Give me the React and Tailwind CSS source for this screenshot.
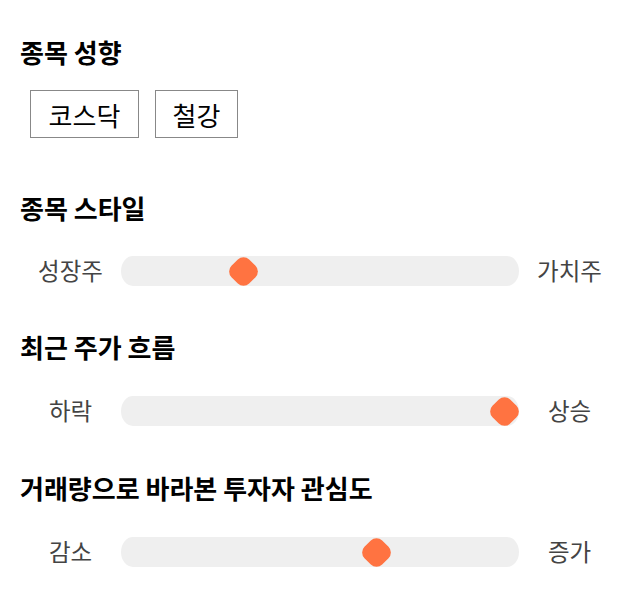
import React from "react";

const sliders = [
  { title: "종목 스타일", left: "성장주", right: "가치주", value: 0.293 },
  { title: "최근 주가 흐름", left: "하락", right: "상승", value: 1 },
  { title: "거래량으로 바라본 투자자 관심도", left: "감소", right: "증가", value: 0.653 },
];

function Heading({ children, className = "" }) {
  return (
    <h2 className={"h-[32px] leading-[32px] text-[26px] font-bold text-black " + className}>
      {children}
    </h2>
  );
}

function Slider({ left, right, value }) {
  return (
    <div className="flex items-center h-[30px]">
      <div className="w-[101px] text-center text-[23.5px] text-[#444]">{left}</div>
      <div className="relative flex-1 h-[30px] rounded-[12px/15px] bg-[#efefef]">
        <div
          className="absolute top-0 w-[29px] h-[30px] flex items-center justify-center"
          style={{ left: `${value * (398 - 29)}px` }}
        >
          <div className="w-[25px] h-[25px] rotate-45 rounded-[8px] bg-[#ff7341]" />
        </div>
      </div>
      <div className="w-[101px] text-center text-[23.5px] text-[#444]">{right}</div>
    </div>
  );
}

export default function App() {
  return (
    <div
      className="w-[640px] h-[606px] bg-white px-5 pt-[36px]"
      style={{ fontFamily: '"Noto Sans CJK KR", "Noto Sans", sans-serif' }}
    >
      <Heading>종목 성향</Heading>
      <div className="flex gap-[16px] ml-[10px] mt-[22px]">
        <div className="h-[48px] w-[109px] border border-[#888] flex items-center justify-center text-[26px] text-black">
          코스닥
        </div>
        <div className="h-[48px] w-[83px] border border-[#888] flex items-center justify-center text-[26px] text-black">
          철강
        </div>
      </div>
      <Heading className="mt-[54px]">{sliders[0].title}</Heading>
      <div className="mt-[32px]">
        <Slider {...sliders[0]} />
      </div>
      <Heading className="mt-[45px]">{sliders[1].title}</Heading>
      <div className="mt-[33px]">
        <Slider {...sliders[1]} />
      </div>
      <Heading className="mt-[46px]">{sliders[2].title}</Heading>
      <div className="mt-[33px]">
        <Slider {...sliders[2]} />
      </div>
    </div>
  );
}
